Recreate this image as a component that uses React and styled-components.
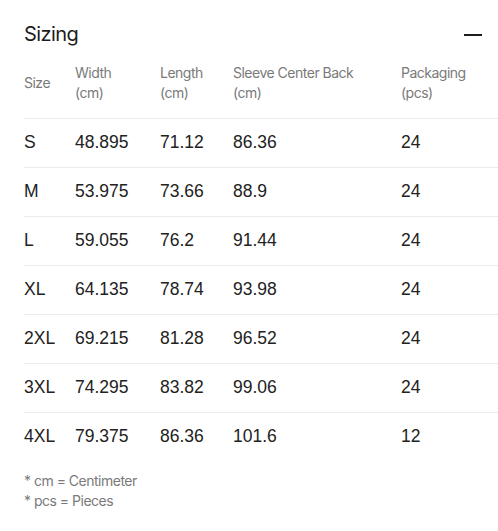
import styled, { createGlobalStyle } from "styled-components";

const sizes = [
  { size: "S", width: "48.895", length: "71.12", sleeve: "86.36", pack: "24" },
  { size: "M", width: "53.975", length: "73.66", sleeve: "88.9", pack: "24" },
  { size: "L", width: "59.055", length: "76.2", sleeve: "91.44", pack: "24" },
  { size: "XL", width: "64.135", length: "78.74", sleeve: "93.98", pack: "24" },
  { size: "2XL", width: "69.215", length: "81.28", sleeve: "96.52", pack: "24" },
  { size: "3XL", width: "74.295", length: "83.82", sleeve: "99.06", pack: "24" },
  { size: "4XL", width: "79.375", length: "86.36", sleeve: "101.6", pack: "12" },
];

export default function App() {
  return (
    <>
      <GlobalStyle />
      <Panel>
        <PanelHeader>
          <Title>Sizing</Title>
          <CollapseButton type="button" aria-label="Collapse">
            <MinusBar />
          </CollapseButton>
        </PanelHeader>

        <Table>
          <colgroup>
            <col style={{ width: 51 }} />
            <col style={{ width: 85 }} />
            <col style={{ width: 73 }} />
            <col style={{ width: 168 }} />
            <col />
          </colgroup>
          <thead>
            <tr>
              <HeadCell>Size</HeadCell>
              <HeadCell>
                Width
                <br />
                (cm)
              </HeadCell>
              <HeadCell>
                Length
                <br />
                (cm)
              </HeadCell>
              <HeadCell>
                Sleeve Center Back
                <br />
                (cm)
              </HeadCell>
              <HeadCell>
                Packaging
                <br />
                (pcs)
              </HeadCell>
            </tr>
          </thead>
          <tbody>
            {sizes.map((row) => (
              <Row key={row.size}>
                <Cell>{row.size}</Cell>
                <Cell>{row.width}</Cell>
                <Cell>{row.length}</Cell>
                <Cell>{row.sleeve}</Cell>
                <Cell>{row.pack}</Cell>
              </Row>
            ))}
          </tbody>
        </Table>

        <Notes>
          <p>* cm = Centimeter</p>
          <p>* pcs = Pieces</p>
        </Notes>
      </Panel>
    </>
  );
}

const GlobalStyle = createGlobalStyle`
  body {
    margin: 0;
    background: #ffffff;
    font-family: Inter, "Liberation Sans", sans-serif;
  }
`;

const Panel = styled.section`
  padding: 22px 0 0 24px;
`;

const PanelHeader = styled.div`
  display: flex;
  align-items: center;
  justify-content: space-between;
  padding-right: 16px;
  height: 24px;
  margin-bottom: 2px;
`;

const Title = styled.h2`
  margin: 0;
  font-size: 20px;
  font-weight: 400;
  letter-spacing: -0.6px;
  line-height: 24px;
  color: #1c1c1c;
`;

const CollapseButton = styled.button`
  background: transparent;
  border: none;
  padding: 0;
  width: 18px;
  height: 24px;
  display: flex;
  align-items: center;
  cursor: pointer;
`;

const MinusBar = styled.span`
  display: block;
  width: 18px;
  height: 2px;
  background: #1c1c1c;
  margin-top: 1px;
`;

const Table = styled.table`
  width: 100%;
  border-collapse: collapse;
  table-layout: fixed;
`;

const HeadCell = styled.th`
  padding: 15px 0;
  text-align: left;
  vertical-align: middle;
  font-family: Inter, "Liberation Sans", sans-serif;
  font-size: 14px;
  font-weight: 400;
  letter-spacing: -0.5px;
  line-height: 20px;
  color: #7a7a7a;
  border-bottom: 1px solid #ebebeb;
`;

const Row = styled.tr`
  border-bottom: 1px solid #ebebeb;

  &:last-child {
    border-bottom: none;
  }
`;

const Cell = styled.td`
  padding: 13px 0 15px;
  font-family: "Liberation Sans", Arial, sans-serif;
  font-size: 17.5px;
  line-height: 20px;
  color: #222222;
`;

const Notes = styled.div`
  margin-top: 10px;
  font-size: 14px;
  line-height: 20px;
  letter-spacing: -0.5px;
  color: #7a7a7a;

  p {
    margin: 0;
  }
`;
